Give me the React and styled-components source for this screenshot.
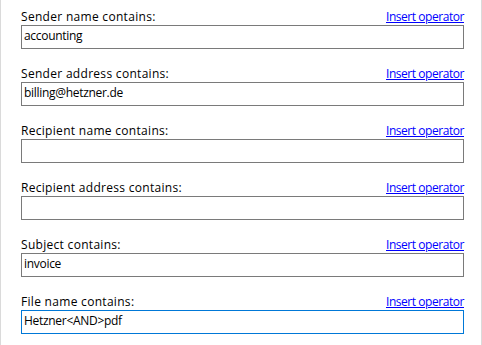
import styled, { createGlobalStyle } from "styled-components";

const GlobalStyle = createGlobalStyle`
  html, body {
    margin: 0;
    padding: 0;
    background: #ffffff;
  }
`;

const Panel = styled.div`
  box-sizing: border-box;
  width: 482px;
  height: 345px;
  padding: 9px 17px 0 20px;
  border-left: 1px solid #dadada;
  border-right: 1px solid #dadada;
  display: flex;
  flex-direction: column;
  gap: 17px;
  font-family: "Open Sans", "Noto Sans", sans-serif;
  font-size: 12px;
  color: #000000;
`;

const Field = styled.div`
  display: flex;
  flex-direction: column;
`;

const LabelRow = styled.div`
  display: flex;
  justify-content: space-between;
  align-items: baseline;
  height: 16px;
  line-height: 16px;
`;

const Label = styled.label`
  letter-spacing: 0.3px;
`;

const InsertLink = styled.a`
  color: #0000ff;
  text-decoration: underline;
  letter-spacing: -0.45px;
  cursor: pointer;
`;

const TextBox = styled.input`
  box-sizing: border-box;
  width: 100%;
  height: 24px;
  margin: 0;
  padding: 0 2px 3px;
  border: 1px solid ${({ $focused }) => ($focused ? "#0078d7" : "#7a7a7a")};
  border-radius: 0;
  outline: none;
  font-family: inherit;
  font-size: 12px;
  letter-spacing: -0.3px;
  color: #000000;
  background: #ffffff;
`;

const fields = [
  { label: "Sender name contains:", value: "accounting" },
  { label: "Sender address contains:", value: "billing@hetzner.de" },
  { label: "Recipient name contains:", value: "" },
  { label: "Recipient address contains:", value: "" },
  { label: "Subject contains:", value: "invoice" },
  { label: "File name contains:", value: "Hetzner<AND>pdf", focused: true },
];

const App = () => {
  return (
    <>
      <GlobalStyle />
      <Panel>
        {fields.map((f) => (
          <Field key={f.label}>
            <LabelRow>
              <Label>{f.label}</Label>
              <InsertLink>Insert operator</InsertLink>
            </LabelRow>
            <TextBox defaultValue={f.value} $focused={f.focused} readOnly />
          </Field>
        ))}
      </Panel>
    </>
  );
};

export default App;
